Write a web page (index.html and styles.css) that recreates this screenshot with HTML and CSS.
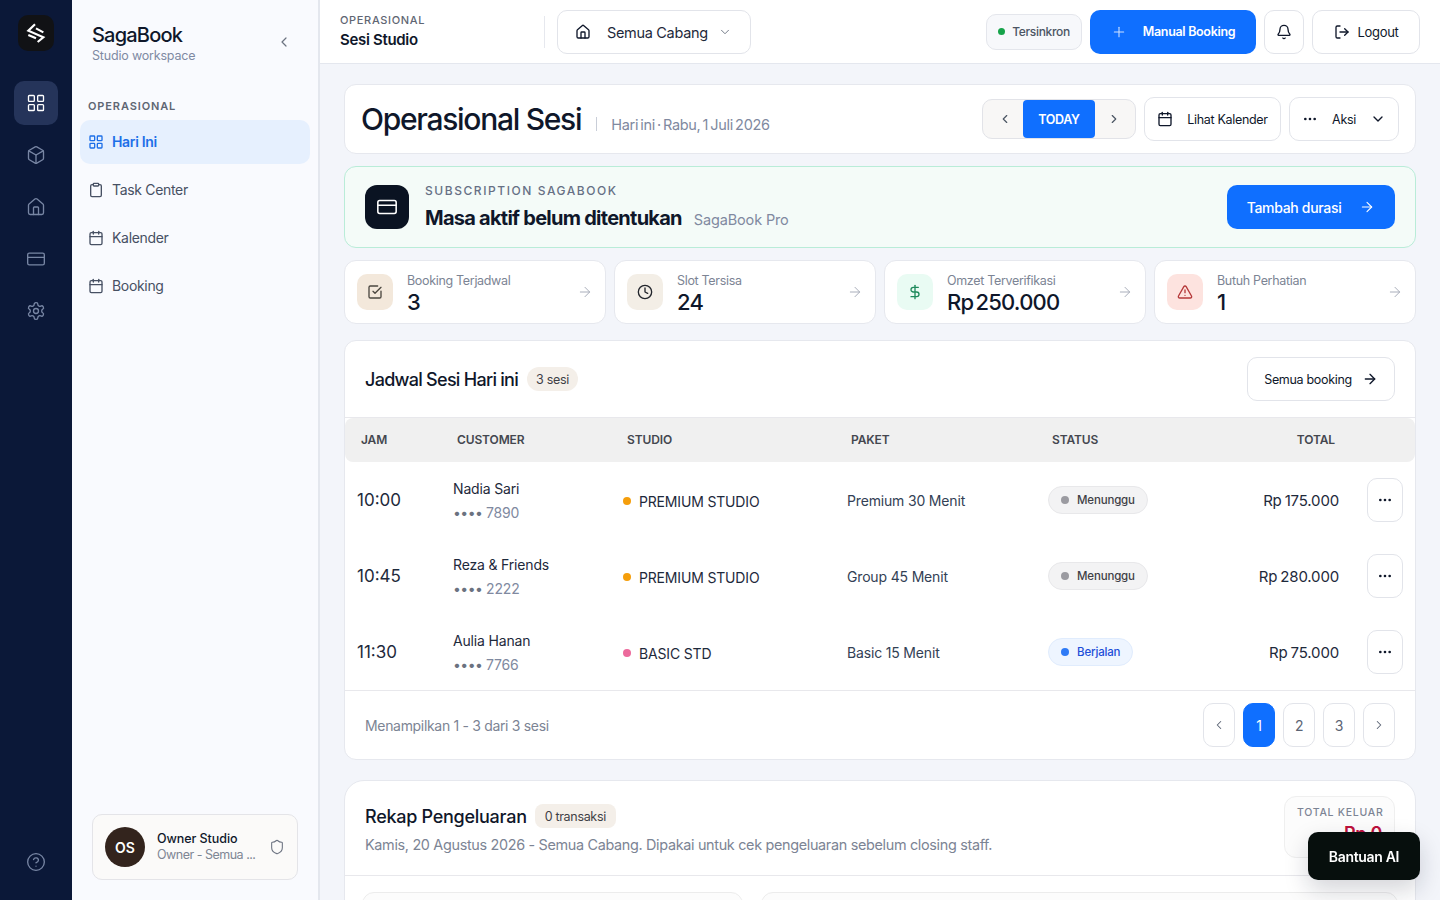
FILE: index.html
```html
<!DOCTYPE html>
<html lang="id">
<head>
    <meta charset="UTF-8">
    <meta name="viewport" content="width=device-width, initial-scale=1.0">
    <title>SagaBook - Operasional Sesi</title>
    <link rel="stylesheet" href="styles.css">
</head>
<body>
    <svg class="sprite" width="0" height="0" aria-hidden="true">
        <symbol id="i-grid" viewBox="0 0 24 24"><rect x="3" y="3" width="7" height="7" rx="1"/><rect x="14" y="3" width="7" height="7" rx="1"/><rect x="14" y="14" width="7" height="7" rx="1"/><rect x="3" y="14" width="7" height="7" rx="1"/></symbol>
        <symbol id="i-box" viewBox="0 0 24 24"><path d="M21 8a2 2 0 0 0-1-1.73l-7-4a2 2 0 0 0-2 0l-7 4A2 2 0 0 0 3 8v8a2 2 0 0 0 1 1.73l7 4a2 2 0 0 0 2 0l7-4A2 2 0 0 0 21 16Z"/><path d="m3.3 7 8.7 5 8.7-5"/><path d="M12 22V12"/></symbol>
        <symbol id="i-home" viewBox="0 0 24 24"><path d="M15 21v-8a1 1 0 0 0-1-1h-4a1 1 0 0 0-1 1v8"/><path d="M3 10a2 2 0 0 1 .7-1.5l7-6a2 2 0 0 1 2.6 0l7 6A2 2 0 0 1 21 10v9a2 2 0 0 1-2 2H5a2 2 0 0 1-2-2z"/></symbol>
        <symbol id="i-card" viewBox="0 0 24 24"><rect x="2" y="5" width="20" height="14" rx="2"/><path d="M2 10h20"/></symbol>
        <symbol id="i-gear" viewBox="0 0 24 24"><path d="M12.22 2h-.44a2 2 0 0 0-2 2v.18a2 2 0 0 1-1 1.73l-.43.25a2 2 0 0 1-2 0l-.15-.08a2 2 0 0 0-2.73.73l-.22.38a2 2 0 0 0 .73 2.73l.15.1a2 2 0 0 1 1 1.72v.51a2 2 0 0 1-1 1.74l-.15.09a2 2 0 0 0-.73 2.73l.22.38a2 2 0 0 0 2.73.73l.15-.08a2 2 0 0 1 2 0l.43.25a2 2 0 0 1 1 1.73V20a2 2 0 0 0 2 2h.44a2 2 0 0 0 2-2v-.18a2 2 0 0 1 1-1.73l.43-.25a2 2 0 0 1 2 0l.15.08a2 2 0 0 0 2.73-.73l.22-.39a2 2 0 0 0-.73-2.73l-.15-.08a2 2 0 0 1-1-1.74v-.5a2 2 0 0 1 1-1.74l.15-.09a2 2 0 0 0 .73-2.73l-.22-.38a2 2 0 0 0-2.73-.73l-.15.08a2 2 0 0 1-2 0l-.43-.25a2 2 0 0 1-1-1.73V4a2 2 0 0 0-2-2z"/><circle cx="12" cy="12" r="3"/></symbol>
        <symbol id="i-help" viewBox="0 0 24 24"><circle cx="12" cy="12" r="10"/><path d="M9.09 9a3 3 0 0 1 5.83 1c0 2-3 3-3 3"/><path d="M12 17h.01"/></symbol>
        <symbol id="i-clip" viewBox="0 0 24 24"><rect x="8" y="2" width="8" height="4" rx="1"/><path d="M16 4h2a2 2 0 0 1 2 2v14a2 2 0 0 1-2 2H6a2 2 0 0 1-2-2V6a2 2 0 0 1 2-2h2"/></symbol>
        <symbol id="i-cal" viewBox="0 0 24 24"><path d="M8 2v4"/><path d="M16 2v4"/><rect x="3" y="4" width="18" height="18" rx="2"/><path d="M3 10h18"/></symbol>
        <symbol id="i-left" viewBox="0 0 24 24"><path d="m15 18-6-6 6-6"/></symbol>
        <symbol id="i-right" viewBox="0 0 24 24"><path d="m9 18 6-6-6-6"/></symbol>
        <symbol id="i-down" viewBox="0 0 24 24"><path d="m6 9 6 6 6-6"/></symbol>
        <symbol id="i-arrow" viewBox="0 0 24 24"><path d="M5 12h14"/><path d="m12 5 7 7-7 7"/></symbol>
        <symbol id="i-plus" viewBox="0 0 24 24"><path d="M5 12h14"/><path d="M12 5v14"/></symbol>
        <symbol id="i-bell" viewBox="0 0 24 24"><path d="M10.27 21a2 2 0 0 0 3.46 0"/><path d="M3.26 15.33A1 1 0 0 0 4 17h16a1 1 0 0 0 .74-1.67C19.41 13.96 18 12.5 18 8A6 6 0 0 0 6 8c0 4.5-1.41 5.96-2.74 7.33"/></symbol>
        <symbol id="i-logout" viewBox="0 0 24 24"><path d="M9 21H5a2 2 0 0 1-2-2V5a2 2 0 0 1 2-2h4"/><path d="m16 17 5-5-5-5"/><path d="M21 12H9"/></symbol>
        <symbol id="i-dots" viewBox="0 0 24 24"><circle cx="5" cy="12" r="1"/><circle cx="12" cy="12" r="1"/><circle cx="19" cy="12" r="1"/></symbol>
        <symbol id="i-check" viewBox="0 0 24 24"><path d="M21 10.66V19a2 2 0 0 1-2 2H5a2 2 0 0 1-2-2V5a2 2 0 0 1 2-2h11"/><path d="m9 11 3 3 9-9"/></symbol>
        <symbol id="i-clock" viewBox="0 0 24 24"><circle cx="12" cy="12" r="10"/><path d="M12 6v6l4 2"/></symbol>
        <symbol id="i-dollar" viewBox="0 0 24 24"><path d="M12 2v20"/><path d="M17 5H9.5a3.5 3.5 0 0 0 0 7h5a3.5 3.5 0 0 1 0 7H6"/></symbol>
        <symbol id="i-alert" viewBox="0 0 24 24"><path d="m21.73 18-8-14a2 2 0 0 0-3.48 0l-8 14A2 2 0 0 0 4 21h16a2 2 0 0 0 1.73-3"/><path d="M12 9v4"/><path d="M12 17h.01"/></symbol>
        <symbol id="i-shield" viewBox="0 0 24 24"><path d="M20 13c0 5-3.5 7.5-7.66 8.95a1 1 0 0 1-.67-.01C7.5 20.5 4 18 4 13V6a1 1 0 0 1 1-1c2 0 4.5-1.2 6.24-2.72a1.17 1.17 0 0 1 1.52 0C14.51 3.81 17 5 19 5a1 1 0 0 1 1 1z"/></symbol>
    </svg>

    <div class="app">
        <nav class="rail">
            <div class="rail-logo">
                <svg class="ico logo-mark" viewBox="0 0 24 24"><path d="M10.8 1.5 2.8 9.2l18 8-6.8 5.6"/><path d="M12 6.4l8.8 4.8"/><path d="M2.8 14.4l9.2 4"/></svg>
            </div>
            <a class="rail-item active"><svg class="ico"><use href="#i-grid"/></svg></a>
            <a class="rail-item"><svg class="ico"><use href="#i-box"/></svg></a>
            <a class="rail-item"><svg class="ico"><use href="#i-home"/></svg></a>
            <a class="rail-item"><svg class="ico"><use href="#i-card"/></svg></a>
            <a class="rail-item"><svg class="ico"><use href="#i-gear"/></svg></a>
            <a class="rail-item rail-help"><svg class="ico"><use href="#i-help"/></svg></a>
        </nav>

        <aside class="sidebar">
            <div class="brand">
                <div>
                    <div class="brand-name">SagaBook</div>
                    <div class="brand-sub">Studio workspace</div>
                </div>
                <svg class="ico brand-toggle"><use href="#i-left"/></svg>
            </div>
            <div class="side-label">OPERASIONAL</div>
            <a class="side-item active"><svg class="ico"><use href="#i-grid"/></svg>Hari Ini</a>
            <a class="side-item"><svg class="ico"><use href="#i-clip"/></svg>Task Center</a>
            <a class="side-item"><svg class="ico"><use href="#i-cal"/></svg>Kalender</a>
            <a class="side-item"><svg class="ico"><use href="#i-cal"/></svg>Booking</a>
            <div class="owner">
                <div class="avatar">OS</div>
                <div class="owner-text">
                    <div class="owner-name">Owner Studio</div>
                    <div class="owner-role">Owner - Semua ...</div>
                </div>
                <svg class="ico owner-shield"><use href="#i-shield"/></svg>
            </div>
        </aside>

        <div class="main">
            <header class="topbar">
                <div class="crumb">
                    <div class="crumb-top">OPERASIONAL</div>
                    <div class="crumb-title">Sesi Studio</div>
                </div>
                <div class="top-divider"></div>
                <button class="btn branch"><svg class="ico"><use href="#i-home"/></svg><span>Semua Cabang</span><svg class="ico branch-caret"><use href="#i-down"/></svg></button>
                <div class="sync"><span class="sync-dot"></span>Tersinkron</div>
                <button class="btn-primary manual"><svg class="ico"><use href="#i-plus"/></svg>Manual Booking</button>
                <button class="btn bell"><svg class="ico"><use href="#i-bell"/></svg></button>
                <button class="btn logout"><svg class="ico"><use href="#i-logout"/></svg>Logout</button>
            </header>

            <main class="content">
                <section class="card page-head">
                    <h1>Operasional Sesi</h1>
                    <span class="head-sep"></span>
                    <span class="head-date">Hari ini · Rabu, 1 Juli 2026</span>
                    <div class="head-actions">
                        <div class="day-switch">
                            <button class="day-arrow prev"><svg class="ico"><use href="#i-left"/></svg></button>
                            <button class="day-today">TODAY</button>
                            <button class="day-arrow next"><svg class="ico"><use href="#i-right"/></svg></button>
                        </div>
                        <button class="btn cal-btn"><svg class="ico"><use href="#i-cal"/></svg>Lihat Kalender</button>
                        <button class="btn aksi-btn"><svg class="ico"><use href="#i-dots"/></svg>Aksi<svg class="ico"><use href="#i-down"/></svg></button>
                    </div>
                </section>

                <section class="sub-banner">
                    <div class="sub-icon"><svg class="ico"><use href="#i-card"/></svg></div>
                    <div>
                        <div class="sub-label">SUBSCRIPTION SAGABOOK</div>
                        <div class="sub-line"><strong>Masa aktif belum ditentukan</strong><span>SagaBook Pro</span></div>
                    </div>
                    <button class="btn-primary sub-btn">Tambah durasi<svg class="ico"><use href="#i-arrow"/></svg></button>
                </section>

                <section class="stats">
                    <a class="card stat">
                        <div class="stat-icon tan"><svg class="ico"><use href="#i-check"/></svg></div>
                        <div class="stat-text"><div class="stat-label">Booking Terjadwal</div><div class="stat-value">3</div></div>
                        <svg class="ico stat-arrow"><use href="#i-arrow"/></svg>
                    </a>
                    <a class="card stat">
                        <div class="stat-icon sand"><svg class="ico"><use href="#i-clock"/></svg></div>
                        <div class="stat-text"><div class="stat-label">Slot Tersisa</div><div class="stat-value">24</div></div>
                        <svg class="ico stat-arrow"><use href="#i-arrow"/></svg>
                    </a>
                    <a class="card stat">
                        <div class="stat-icon mint"><svg class="ico"><use href="#i-dollar"/></svg></div>
                        <div class="stat-text"><div class="stat-label">Omzet Terverifikasi</div><div class="stat-value">Rp 250.000</div></div>
                        <svg class="ico stat-arrow"><use href="#i-arrow"/></svg>
                    </a>
                    <a class="card stat">
                        <div class="stat-icon rose"><svg class="ico"><use href="#i-alert"/></svg></div>
                        <div class="stat-text"><div class="stat-label">Butuh Perhatian</div><div class="stat-value">1</div></div>
                        <svg class="ico stat-arrow"><use href="#i-arrow"/></svg>
                    </a>
                </section>

                <section class="card schedule">
                    <div class="schedule-head">
                        <h2>Jadwal Sesi Hari ini</h2>
                        <span class="count">3 sesi</span>
                        <button class="btn all-btn">Semua booking<svg class="ico"><use href="#i-arrow"/></svg></button>
                    </div>
                    <div class="row row-head">
                        <div>JAM</div><div>CUSTOMER</div><div>STUDIO</div><div>PAKET</div><div>STATUS</div><div class="total">TOTAL</div>
                    </div>
                    <div class="row">
                        <div class="time">10:00</div>
                        <div class="customer"><div class="cust">Nadia Sari</div><div class="phone"><i>••••</i> 7890</div></div>
                        <div class="studio"><span class="dot amber"></span>PREMIUM STUDIO</div>
                        <div class="paket">Premium 30 Menit</div>
                        <div><span class="pill wait"><span class="pill-dot"></span>Menunggu</span></div>
                        <div class="total">Rp 175.000</div>
                        <button class="btn more"><svg class="ico"><use href="#i-dots"/></svg></button>
                    </div>
                    <div class="row">
                        <div class="time">10:45</div>
                        <div class="customer"><div class="cust">Reza &amp; Friends</div><div class="phone"><i>••••</i> 2222</div></div>
                        <div class="studio"><span class="dot amber"></span>PREMIUM STUDIO</div>
                        <div class="paket">Group 45 Menit</div>
                        <div><span class="pill wait"><span class="pill-dot"></span>Menunggu</span></div>
                        <div class="total">Rp 280.000</div>
                        <button class="btn more"><svg class="ico"><use href="#i-dots"/></svg></button>
                    </div>
                    <div class="row">
                        <div class="time">11:30</div>
                        <div class="customer"><div class="cust">Aulia Hanan</div><div class="phone"><i>••••</i> 7766</div></div>
                        <div class="studio"><span class="dot pink"></span>BASIC STD</div>
                        <div class="paket">Basic 15 Menit</div>
                        <div><span class="pill run"><span class="pill-dot"></span>Berjalan</span></div>
                        <div class="total">Rp 75.000</div>
                        <button class="btn more"><svg class="ico"><use href="#i-dots"/></svg></button>
                    </div>
                    <div class="schedule-foot">
                        <span>Menampilkan 1 - 3 dari 3 sesi</span>
                        <div class="pager">
                            <button class="btn"><svg class="ico"><use href="#i-left"/></svg></button>
                            <button class="btn current">1</button>
                            <button class="btn">2</button>
                            <button class="btn">3</button>
                            <button class="btn"><svg class="ico"><use href="#i-right"/></svg></button>
                        </div>
                    </div>
                </section>

                <section class="card expense">
                    <div class="expense-head">
                        <div>
                            <div class="expense-title"><h2>Rekap Pengeluaran</h2><span class="count square">0 transaksi</span></div>
                            <p>Kamis, 20 Agustus 2026 - Semua Cabang. Dipakai untuk cek pengeluaran sebelum closing staff.</p>
                        </div>
                        <div class="expense-total">
                            <div class="expense-label">TOTAL KELUAR</div>
                            <div class="expense-value">Rp 0</div>
                        </div>
                    </div>
                    <div class="expense-body">
                        <div class="expense-panel"></div>
                        <div class="expense-panel"></div>
                    </div>
                </section>
            </main>
        </div>
    </div>

    <button class="ai-btn">Bantuan AI</button>
</body>
</html>
```

FILE: styles.css
```css
* {
    box-sizing: border-box;
}

html, body {
    height: 100%;
    margin: 0;
    overflow: hidden;
}

body {
    font-family: 'Inter', 'Liberation Sans', sans-serif;
    color: #0f172a;
    background: #f3f5fa;
    letter-spacing: -0.02em;
}

button {
    font-family: inherit;
    letter-spacing: inherit;
    cursor: pointer;
}

h1, h2, p {
    margin: 0;
    font-weight: 500;
}

.sprite {
    position: absolute;
}

.ico {
    width: 16px;
    height: 16px;
    fill: none;
    stroke: currentColor;
    stroke-width: 2;
    stroke-linecap: round;
    stroke-linejoin: round;
    flex-shrink: 0;
}

.app {
    display: flex;
    height: 100vh;
}

/* icon rail */
.rail {
    width: 72px;
    flex-shrink: 0;
    background: #0b1838;
    display: flex;
    flex-direction: column;
    align-items: center;
    padding-top: 15px;
    gap: 8px;
}

.rail-logo {
    width: 36px;
    height: 36px;
    border-radius: 10px;
    background: #111215;
    color: #fff;
    display: flex;
    align-items: center;
    justify-content: center;
    margin-bottom: 22px;
}

.logo-mark {
    width: 20px;
    height: 20px;
    stroke-width: 2.6;
    stroke-linecap: butt;
    stroke-linejoin: miter;
}

.rail-item {
    width: 44px;
    height: 44px;
    border-radius: 10px;
    display: flex;
    align-items: center;
    justify-content: center;
    color: #7886a4;
}

.rail-item .ico {
    width: 20px;
    height: 20px;
    stroke-width: 1.6;
}

.rail-item.active {
    background: #25345a;
    color: #fff;
}

.rail-help {
    margin-top: auto;
    margin-bottom: 16px;
}

/* sidebar */
.sidebar {
    width: 248px;
    flex-shrink: 0;
    background: #f9fafe;
    border-right: 2px solid #e4e7ee;
    padding: 0 8px;
    display: flex;
    flex-direction: column;
}

.brand {
    display: flex;
    justify-content: space-between;
    padding: 24px 18px 0 12px;
    height: 86px;
    align-items: flex-start;
}

.brand-name {
    font-size: 20px;
    line-height: 22px;
    font-weight: 500;
    letter-spacing: -0.04em;
}

.brand-sub {
    font-size: 12.5px;
    line-height: 18px;
    color: #7f8aa3;
    margin-top: 1px;
    letter-spacing: -0.015em;
}

.brand-toggle {
    color: #6b7280;
    margin-top: 10px;
    stroke-width: 1.8;
}

.side-label {
    font-size: 11px;
    font-weight: 600;
    letter-spacing: 0.08em;
    color: #5f6673;
    padding-left: 8px;
    line-height: 14px;
    margin: 13px 0 7px;
}

.side-item {
    display: flex;
    align-items: center;
    gap: 8px;
    height: 44px;
    margin-bottom: 4px;
    padding-left: 8px;
    padding-bottom: 1px;
    border-radius: 10px;
    font-size: 14px;
    color: #475063;
}

.side-item.active {
    background: #e6f0fe;
    color: #1d6fe8;
    font-weight: 600;
}

.owner {
    margin: auto 12px 20px;
    height: 66px;
    display: flex;
    align-items: center;
    padding: 0 12px;
    border: 1px solid #e4e4e8;
    border-radius: 10px;
    background: #fbfaf9;
}

.avatar {
    width: 40px;
    height: 40px;
    border-radius: 50%;
    background: #33241d;
    color: #fff;
    font-size: 14px;
    font-weight: 600;
    display: flex;
    align-items: center;
    justify-content: center;
    letter-spacing: 0;
}

.owner-text {
    margin-left: 12px;
    flex: 1;
}

.owner-name {
    font-size: 12.5px;
    font-weight: 500;
    line-height: 16px;
    letter-spacing: -0.005em;
}

.owner-role {
    font-size: 12.5px;
    color: #7f8694;
    line-height: 16px;
    letter-spacing: -0.04em;
}

.owner-shield {
    color: #6b7280;
    stroke-width: 1.6;
}

/* top bar */
.main {
    flex: 1;
    min-width: 0;
    display: flex;
    flex-direction: column;
}

.topbar {
    height: 64px;
    flex-shrink: 0;
    background: #fff;
    border-bottom: 1px solid #e4e7ee;
    display: flex;
    align-items: center;
    padding: 0 20px;
}

.crumb {
    width: 204px;
}

.crumb-top {
    font-size: 11px;
    font-weight: 500;
    letter-spacing: 0.06em;
    color: #5f6673;
    line-height: 14px;
}

.crumb-title {
    font-size: 15px;
    font-weight: 600;
    line-height: 20px;
    margin-top: 3px;
}

.top-divider {
    width: 1px;
    height: 32px;
    background: #e6e8ee;
    margin-right: 12px;
}

.btn {
    background: #fff;
    border: 1px solid #e2e4ea;
    border-radius: 10px;
    color: #0f172a;
    display: inline-flex;
    align-items: center;
    justify-content: center;
    padding: 0;
}

.btn-primary {
    background: #0f6fff;
    border: none;
    border-radius: 10px;
    color: #fff;
    display: inline-flex;
    align-items: center;
    justify-content: center;
}

.branch {
    width: 194px;
    height: 44px;
    font-size: 14.5px;
    justify-content: flex-start;
    padding-left: 17px;
}

.branch span {
    margin-left: 16px;
    color: #1e293b;
    padding-top: 2px;
}

.branch-caret {
    margin-left: 10px;
    width: 14px;
    height: 14px;
    color: #6b7280;
    stroke-width: 1.6;
}

.sync {
    margin-left: auto;
    height: 36px;
    width: 96px;
    border: 1px solid #e4e6ec;
    border-radius: 10px;
    background: #f7f8fb;
    font-size: 12px;
    font-weight: 500;
    color: #4b5563;
    display: flex;
    align-items: center;
    justify-content: center;
    gap: 7px;
}

.sync-dot {
    width: 7px;
    height: 7px;
    border-radius: 50%;
    background: #16a34a;
}

.manual {
    width: 166px;
    height: 44px;
    margin-left: 8px;
    font-size: 12.5px;
    font-weight: 600;
    gap: 16px;
}

.manual .ico {
    stroke-width: 1.6;
    opacity: 0.8;
}

.bell {
    width: 40px;
    height: 44px;
    margin-left: 8px;
}

.logout {
    width: 108px;
    height: 44px;
    margin-left: 8px;
    font-size: 13px;
    gap: 8px;
}

/* content */
.content {
    flex: 1;
    padding: 20px 24px 0;
    overflow: hidden;
    display: flex;
    flex-direction: column;
}

.card {
    background: #fff;
    border: 1px solid #e6e8ee;
    border-radius: 12px;
    flex-shrink: 0;
}

.page-head {
    height: 70px;
    display: flex;
    align-items: center;
    padding: 0 16px;
}

.page-head h1 {
    font-size: 30px;
    line-height: 38px;
    letter-spacing: -0.043em;
}

.head-sep {
    width: 1px;
    height: 14px;
    background: #c9ced8;
    margin: 10px 14px 0 15px;
}

.head-date {
    font-size: 14.5px;
    color: #8089a0;
    margin-top: 10px;
    word-spacing: -1.6px;
}

.head-actions {
    margin-left: auto;
    display: flex;
    align-items: center;
    gap: 8px;
}

.day-switch {
    width: 154px;
    height: 40px;
    display: flex;
    background: #f8f7f6;
    border: 1px solid #e2e3e8;
    border-radius: 10px;
}

.day-arrow {
    flex: 1;
    border: none;
    background: transparent;
    color: #4b5563;
    display: flex;
    align-items: center;
    justify-content: center;
    padding: 0;
}

.day-arrow.prev { padding-left: 3px; }
.day-arrow.next { padding-right: 3px; }

.day-arrow .ico {
    width: 14px;
    height: 14px;
}

.day-today {
    width: 72px;
    border: none;
    border-radius: 4px;
    background: #0f6fff;
    color: #fff;
    font-size: 12.5px;
    font-weight: 600;
    padding: 0;
}

.cal-btn {
    width: 137px;
    height: 44px;
    font-size: 12.5px;
    gap: 14px;
}

.aksi-btn {
    width: 110px;
    height: 44px;
    font-size: 12.5px;
    gap: 14px;
}

.sub-banner {
    height: 82px;
    margin-top: 12px;
    flex-shrink: 0;
    background: #f4fbf8;
    border: 1px solid #b9ecd8;
    border-radius: 12px;
    display: flex;
    align-items: center;
    padding: 0 20px;
    gap: 16px;
}

.sub-icon {
    width: 44px;
    height: 44px;
    border-radius: 12px;
    background: #0a1322;
    color: #fff;
    display: flex;
    align-items: center;
    justify-content: center;
}

.sub-icon .ico {
    width: 22px;
    height: 22px;
    stroke-width: 1.7;
}

.sub-label {
    font-size: 12px;
    font-weight: 500;
    letter-spacing: 0.13em;
    color: #667085;
    line-height: 16px;
}

.sub-line {
    display: flex;
    align-items: baseline;
    gap: 12px;
    margin-top: 7px;
    margin-bottom: 2px;
}

.sub-line strong {
    font-size: 20px;
    font-weight: 700;
    line-height: 24px;
    letter-spacing: -0.037em;
}

.sub-line span {
    font-size: 14.5px;
    letter-spacing: -0.01em;
    color: #8089a0;
}

.sub-btn {
    margin-left: auto;
    width: 168px;
    height: 44px;
    font-size: 14px;
    font-weight: 500;
    gap: 18px;
}

.sub-btn .ico {
    stroke-width: 1.6;
}

.stats {
    display: grid;
    grid-template-columns: repeat(4, 1fr);
    gap: 8px;
    margin-top: 12px;
    flex-shrink: 0;
}

.stat {
    height: 64px;
    display: flex;
    align-items: center;
    padding: 0 12px;
}

.stat-icon {
    width: 36px;
    height: 36px;
    border-radius: 10px;
    display: flex;
    align-items: center;
    justify-content: center;
}

.stat-icon.tan { background: #f3e8db; color: #4b4740; }
.stat-icon.sand { background: #f3eee6; color: #22252c; }
.stat-icon.mint { background: #e9fbf3; color: #1f8a5c; }
.stat-icon.rose { background: #fde3df; color: #b5393a; }

.stat-text {
    margin-left: 14px;
    flex: 1;
    padding-top: 4px;
}

.stat-label {
    font-size: 12.5px;
    line-height: 16px;
    color: #7c8494;
}

.stat-value {
    font-size: 22px;
    font-weight: 500;
    line-height: 26px;
    letter-spacing: -0.035em;
    word-spacing: -3px;
}

.stat-arrow {
    width: 16px;
    height: 16px;
    color: #a9aebb;
    stroke-width: 1.5;
}

/* schedule */
.schedule {
    margin-top: 16px;
    height: 420px;
    display: flex;
    flex-direction: column;
}

.schedule-head {
    height: 77px;
    flex-shrink: 0;
    display: flex;
    align-items: center;
    padding: 0 20px;
    border-bottom: 1px solid #e8e8ec;
}

.schedule-head h2 {
    font-size: 18px;
    letter-spacing: -0.04em;
}

.count {
    margin-left: 9px;
    height: 24px;
    padding: 0 9px;
    border-radius: 12px;
    background: #f4efe9;
    font-size: 12.5px;
    color: #3f3f46;
    display: inline-flex;
    align-items: center;
}

.all-btn {
    margin-left: auto;
    width: 148px;
    height: 44px;
    font-size: 12.5px;
    gap: 10px;
}

.row {
    display: grid;
    grid-template-columns: 96px 170px 224px 201px 140px 151px 64px;
    align-items: center;
    height: 76px;
    padding-left: 12px;
    font-size: 14px;
    letter-spacing: -0.012em;
    white-space: nowrap;
}

.row > .more {
    margin-left: 28px;
    width: 36px;
    height: 44px;
}

.row-head {
    height: 44px;
    padding-bottom: 2px;
    background: #f0f0f0;
    border-radius: 8px;
    font-size: 12px;
    font-weight: 600;
    color: #44474f;
    letter-spacing: -0.01em;
    flex-shrink: 0;
}

.row-head > div {
    padding: 0 4px;
}

.total {
    text-align: right;
    color: #1e293b;
    font-size: 15px;
    word-spacing: -1px;
}

.row-head .total {
    font-size: 12px;
    color: #44474f;
}

.time {
    font-size: 17px;
    letter-spacing: 0;
    color: #1e293b;
}

.customer {
    padding-top: 2px;
}

.cust {
    font-size: 14px;
    line-height: 20px;
    color: #1e293b;
}

.phone {
    font-size: 14px;
    line-height: 20px;
    color: #8089a0;
    margin-top: 4px;
}

.phone i {
    font-style: normal;
    color: #6b7280;
    letter-spacing: -0.04em;
}

.studio {
    display: flex;
    align-items: center;
    color: #1e293b;
    margin-top: 2px;
}

.dot {
    width: 8px;
    height: 8px;
    border-radius: 50%;
    margin-right: 8px;
}

.dot.amber { background: #f59e0b; }
.dot.pink { background: #ec6a9c; }

.paket {
    color: #334155;
}

.pill {
    display: inline-flex;
    align-items: center;
    gap: 8px;
    height: 28px;
    padding: 0 12px;
    border-radius: 14px;
    font-size: 11.5px;
    font-weight: 500;
    border: 1px solid;
}

.pill-dot {
    width: 8px;
    height: 8px;
    border-radius: 50%;
}

.pill.wait {
    background: #f3f3f4;
    border-color: #e8e8ea;
    color: #3f3f46;
}

.pill.wait .pill-dot { background: #9b9ba1; }

.pill.run {
    background: #eef5ff;
    border-color: #e0ecfd;
    color: #1d4ed8;
}

.pill.run .pill-dot { background: #2f7bf6; }

.schedule-foot {
    margin-top: auto;
    height: 69px;
    border-top: 1px solid #e8e8ec;
    display: flex;
    align-items: center;
    justify-content: space-between;
    padding: 0 20px;
    font-size: 14px;
    color: #7c8494;
    flex-shrink: 0;
}

.pager {
    display: flex;
    gap: 8px;
}

.pager .btn {
    width: 32px;
    height: 44px;
    font-size: 14px;
    color: #5b6474;
}

.pager .ico {
    width: 14px;
    height: 14px;
    stroke-width: 1.8;
}

.pager .current {
    background: #0f6fff;
    border-color: #0f6fff;
    color: #fff;
}

/* expense */
.expense {
    margin-top: 20px;
    height: 300px;
    border-radius: 20px;
}

.expense-head {
    height: 95px;
    display: flex;
    justify-content: space-between;
    padding: 16px 20px 0;
    border-bottom: 1px solid #e8e8ec;
}

.expense-title {
    display: flex;
    align-items: center;
    height: 26px;
    margin-top: 6px;
}

.expense-title h2 {
    font-size: 18px;
    letter-spacing: -0.015em;
}

.count.square {
    margin-left: 8px;
    border-radius: 8px;
    height: 24px;
    padding: 0 10px;
}

.expense-head p {
    font-size: 14.4px;
    font-weight: 400;
    color: #7c8494;
    margin-top: 7px;
}

.expense-total {
    width: 111px;
    height: 62px;
    border: 1px solid #efefef;
    border-radius: 12px;
    background: #fcfcfc;
    padding: 9px 12px;
    margin-top: -1px;
    text-align: right;
}

.expense-label {
    font-size: 10.5px;
    font-weight: 500;
    letter-spacing: 0.07em;
    color: #7c8494;
    line-height: 14px;
    white-space: nowrap;
}

.expense-value {
    font-size: 18px;
    font-weight: 600;
    color: #be123c;
    margin-top: 3px;
}

.expense-body {
    display: grid;
    grid-template-columns: 381px 1fr;
    gap: 18px;
    padding: 16px 17px;
}

.expense-panel {
    height: 120px;
    border: 1px solid #ececec;
    border-radius: 12px;
    background: #fcfcfc;
}

/* floating help */
.ai-btn {
    position: fixed;
    right: 20px;
    bottom: 20px;
    width: 112px;
    height: 48px;
    border: none;
    border-radius: 10px;
    background: #070f0d;
    color: #fff;
    font-size: 14px;
    font-weight: 600;
    box-shadow: 0 10px 24px rgba(15, 23, 42, 0.18);
}
```
